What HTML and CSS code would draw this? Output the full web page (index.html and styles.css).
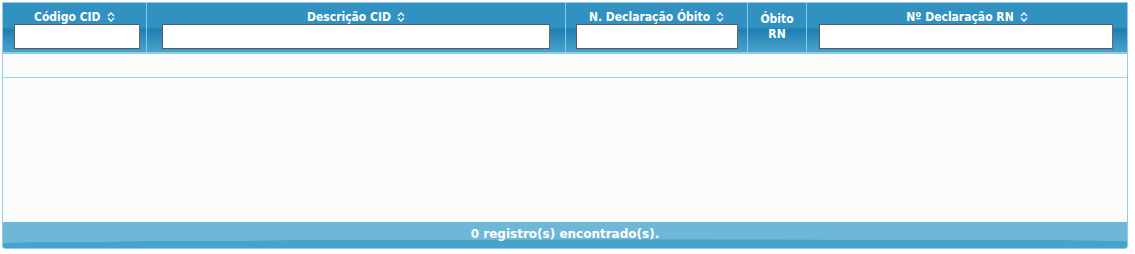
FILE: index.html
```html
<!DOCTYPE html>
<html>
<head>
<meta charset="utf-8">
<link rel="stylesheet" href="styles.css">
</head>
<body>
<div class="table">
  <div class="head">
    <div class="col c1">
      <div class="title">Código CID <svg class="sort" viewBox="0 0 8 10"><path d="M1 4 L4 1 L7 4 M1 6 L4 9 L7 6" fill="none" stroke="#fff" stroke-width="1.3"/></svg></div>
      <div class="input i1"></div>
    </div>
    <div class="col c2">
      <div class="title">Descrição CID <svg class="sort" viewBox="0 0 8 10"><path d="M1 4 L4 1 L7 4 M1 6 L4 9 L7 6" fill="none" stroke="#fff" stroke-width="1.3"/></svg></div>
      <div class="input i2"></div>
    </div>
    <div class="col c3">
      <div class="title">N. Declaração Óbito <svg class="sort" viewBox="0 0 8 10"><path d="M1 4 L4 1 L7 4 M1 6 L4 9 L7 6" fill="none" stroke="#fff" stroke-width="1.3"/></svg></div>
      <div class="input i3"></div>
    </div>
    <div class="col c4">
      <div class="title two">Óbito<br>RN</div>
    </div>
    <div class="col c5">
      <div class="title">Nº Declaração RN <svg class="sort" viewBox="0 0 8 10"><path d="M1 4 L4 1 L7 4 M1 6 L4 9 L7 6" fill="none" stroke="#fff" stroke-width="1.3"/></svg></div>
      <div class="input i5"></div>
    </div>
  </div>
  <div class="row"></div>
  <div class="body"></div>
  <div class="foot">0 registro(s) encontrado(s).</div>
</div>
</body>
</html>
```
FILE: styles.css
```css
html, body { margin: 0; padding: 0; background: #fff; }
body { padding: 2px 0 0 2px; font-family: "DejaVu Sans Condensed", "DejaVu Sans", sans-serif; }
.table {
  width: 1124px;
  height: 245px;
  border: 1px solid #97c9e4;
  border-radius: 0 0 3px 3px;
  background: #fbfdfd;
  display: flex;
  flex-direction: column;
  overflow: hidden;
}
.head {
  display: flex;
  height: 49px;
  border-bottom: 2px solid #8ccdeb;
  background: linear-gradient(to bottom, #3191c0 0px, #3191c0 24px, #1b7db1 27px, #2a89ba 32px, #4aa2ca 49px);
}
.col {
  box-sizing: border-box;
  border-right: 1px solid #7fcdee;
  display: flex;
  flex-direction: column;
  align-items: center;
  color: #fff;
}
.col:last-child { border-right: none; }
.c1 { width: 144px; align-items: flex-start; padding-left: 11px; }
.c2 { width: 419px; }
.c3 { width: 182px; }
.c4 { width: 59px; }
.c5 { flex: 1; }
.title {
  font-size: 12px;
  font-weight: bold;
  line-height: 14px;
  padding-top: 6px;
  height: 15px;
  white-space: nowrap;
  display: flex;
  align-items: center;
  gap: 6px;
}
.c1 .title { padding-left: 20px; }
.title.two {
  display: block;
  text-align: center;
  padding-top: 9px;
  line-height: 15px;
}
.sort { width: 8px; height: 10px; }
.input {
  box-sizing: border-box;
  height: 25px;
  margin-top: 0;
  background: #fff;
  border: 1px solid #5a5a5a;
  border-right-color: #6a6a6a;
}
.i1 { width: 126px; }
.i2 { width: 388px; }
.i3 { width: 162px; margin-left: 1px; }
.i5 { width: 294px; margin-left: -2px; }
.row {
  height: 23px;
  border-bottom: 1px solid #a6d0e6;
}
.body { flex: 1; }
.foot {
  height: 26px;
  line-height: 25px;
  text-align: center;
  color: #fff;
  font-family: "DejaVu Sans", sans-serif;
  font-size: 12px;
  font-weight: bold;
  background:
    radial-gradient(ellipse 1400px 14px at 60% 100%, #45a3cc 60%, transparent 62%),
    #6fb7d7;
}
```
